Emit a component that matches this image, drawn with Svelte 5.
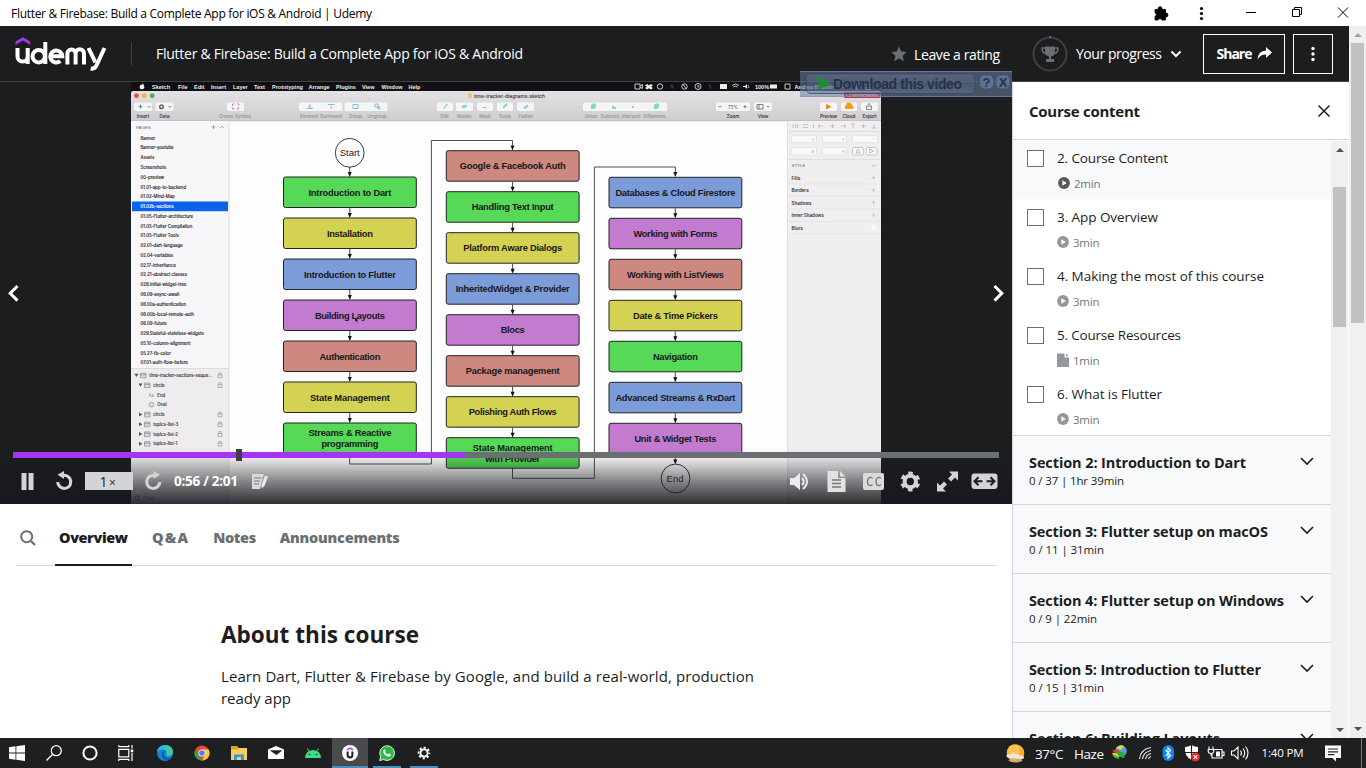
<script>
  const lectures = [
    { t: '2. Course Content', w: 111, d: '2min', icon: 'play', active: true },
    { t: '3. App Overview', w: 101, d: '3min', icon: 'play' },
    { t: '4. Making the most of this course', w: 207, d: '3min', icon: 'play' },
    { t: '5. Course Resources', w: 124, d: '1min', icon: 'file' },
    { t: '6. What is Flutter', w: 105, d: '3min', icon: 'play' }
  ];
  const sections = [
    { t: 'Section 2: Introduction to Dart', w: 217, s: '0 / 37 | 1hr 39min', sw: 95 },
    { t: 'Section 3: Flutter setup on macOS', w: 239, s: '0 / 11 | 31min', sw: 75 },
    { t: 'Section 4: Flutter setup on Windows', w: 255, s: '0 / 9 | 22min', sw: 68 },
    { t: 'Section 5: Introduction to Flutter', w: 232, s: '0 / 15 | 31min', sw: 75 },
    { t: 'Section 6: Building Layouts', w: 191 }
  ];

  const G = '#55d957', Y = '#d4d252', B = '#7b9cd9', P = '#c27bce', R = '#cd8880';
  const columns = [
    { x: 283.5, y: 177, items: [
      ['Introduction to Dart', G, 83], ['Installation', Y, 46], ['Introduction to Flutter', B, 92],
      ['Building Layouts', P, 70], ['Authentication', R, 61], ['State Management', Y, 80],
      ['Streams & Reactive|programming', G, 83, 57]] },
    { x: 446.3, y: 150.7, items: [
      ['Google & Facebook Auth', R, 106], ['Handling Text Input', G, 82], ['Platform Aware Dialogs', Y, 99],
      ['InheritedWidget & Provider', B, 114], ['Blocs', P, 24], ['Package management', R, 94],
      ['Polishing Auth Flows', Y, 88], ['State Management|with Provider', G, 80, 55]] },
    { x: 609, y: 177.3, items: [
      ['Databases & Cloud Firestore', B, 120], ['Working with Forms', P, 84], ['Working with ListViews', R, 97],
      ['Date & Time Pickers', Y, 85], ['Navigation', G, 45], ['Advanced Streams & RxDart', B, 120],
      ['Unit & Widget Tests', P, 82]] }
  ];
  const macMenu = [['Sketch', 152, 1], ['File', 178], ['Edit', 194], ['Insert', 211], ['Layer', 233], ['Text', 254], ['Prototyping', 272], ['Arrange', 308.5], ['Plugins', 336], ['View', 362], ['Window', 381.5], ['Help', 408.5]];
  const pages = ['Banner', 'Banner-youtube', 'Assets', 'Screenshots', '00-preview', '01.01-app-to-backend', '01.02-Mind-Map', '01.02b-sections', '01.05-Flutter-architecture', '01.05-Flutter Compilation', '01.05-Flutter Tools', '02.01-dart-language', '02.04-variables', '02.17-inheritance', '02.21-abstract classes', '028.Initial-widget-tree', '06.09-async-await', '06.00a-authentication', '06.00b-local-remote-auth', '06.09-future', '029.Stateful-stateless-widgets', '05.10-column-alignment', '05.27-fb-color', '07.01-auth-flow-before'];
  const layers = [
    { t: 'time-tracker-sections-seque...', x: 149, open: true, ax: 136.5, lock: true },
    { t: 'circle', x: 153, open: true, ax: 140.5, lock: true },
    { t: 'End', x: 157, text: true },
    { t: 'Oval', x: 157, oval: true },
    { t: 'circle', x: 153, ax: 140.5, lock: true },
    { t: 'topics-list-3', x: 153, ax: 140.5, lock: true },
    { t: 'topics-list-2', x: 153, ax: 140.5, lock: true },
    { t: 'topics-list-1', x: 153, ax: 140.5, lock: true }
  ];
  const tools = [['Insert', 143, 1], ['Data', 164.5, 1], ['Create Symbol', 235], ['Forward', 309], ['Backward', 331], ['Group', 355.5], ['Ungroup', 377], ['Edit', 444.5], ['Rotate', 464.5], ['Mask', 485], ['Scale', 505], ['Flatten', 525.5], ['Union', 591], ['Subtract', 610], ['Intersect', 631], ['Difference', 654.5], ['Zoom', 733, 1], ['View', 763, 1], ['Preview', 828.5, 1], ['Cloud', 849, 1], ['Export', 869.5, 1]];
  const buttons = [[134, 18], [155.5, 18], [227, 17], [299, 43.5], [344.5, 43], [437, 16], [456, 17], [477, 16], [497, 16], [517, 17], [583, 84], [716, 34], [754, 18], [820, 17], [841, 16], [861, 17]];
  const inspector = [['Fills', 177.5], ['Borders', 190], ['Shadows', 202.5], ['Inner Shadows', 215], ['Blurs', 227.5]];

  // Tracks a label so that it spans the given width.
  function fit(node, width) {
    const natural = node.getBoundingClientRect().width;
    const n = node.textContent.length - 1;
    if (n > 0) node.style.letterSpacing = (width - natural) / n + 'px';
  }
</script>

<div class="window">
  <div class="titlebar">
    <span class="apptitle" use:fit={361}>Flutter &amp; Firebase: Build a Complete App for iOS &amp; Android | Udemy</span>
    <svg class="winctl" width="216" height="26" viewBox="1150 0 216 26">
      <path d="M1155 9.500h3.300a2 2 0 1 1 3.600 0h3.600v3.600a2 2 0 1 1 0 3.900V20h-3.600a2 2 0 0 0-3.800 0H1155v-3.600a2 2 0 0 0 0-3.700z" fill="#000" stroke="#000" stroke-width=".8" />
      <g fill="#000"><circle cx="1201.500" cy="8.500" r="1.600" /><circle cx="1201.500" cy="13.500" r="1.600" /><circle cx="1201.500" cy="18.500" r="1.600" /></g>
      <g fill="none" stroke="#000"><path d="M1246 12.500h10" /><path d="M1292.500 9.500h7v7h-7zM1294.500 9.500v-2h7v7h-2" /><path d="M1338 7.500l10 10m0-10l-10 10" /></g>
    </svg>
  </div>

  <div class="page">
    <div class="content">
      <header>
        <svg class="logo" width="92" height="38" viewBox="15 35 92 38">
          <path d="M15.500 41.600L23 37.200l7.300 4.400v3.300L23 40.600l-7.500 4.300z" fill="#a435f0" />
          <g fill="none" stroke="#fff" stroke-width="4">
            <path d="M17.500 48v8.500a5 5 0 0 0 10.200 0V48m0 8v8" />
            <circle cx="38.700" cy="56.200" r="6.200" /><path d="M45.300 42v22" />
            <path d="M50.500 56.200h11.800a6 6 0 1 0-2 4.800" />
            <path d="M67.400 64.500V53.500a4.100 4.100 0 0 1 8.200 0v11m0-11a4.200 4.200 0 0 1 8.400 0v11" />
            <path d="M88.500 48l6.900 14.300M104.500 48l-7.800 17q-2 4.500-6 3.500" />
          </g>
        </svg>
        <i class="divider"></i>
        <div class="course"><span use:fit={367}>Flutter &amp; Firebase: Build a Complete App for iOS &amp; Android</span></div>
        <div class="rating">
          <svg width="16" height="16" viewBox="0 0 16 16"><path d="M8 .5l2.200 5 5.500.5-4.100 3.700 1.200 5.500L8 12.300l-4.800 2.900 1.200-5.500L.3 6l5.500-.5z" fill="#6a6f73" /></svg>
          <span use:fit={86}>Leave a rating</span>
        </div>
        <div class="progress">
          <svg width="36" height="36" viewBox="0 0 36 36">
            <circle cx="18" cy="18" r="16.500" fill="none" stroke="#3e4143" stroke-width="2" /><path d="M17.500 1h1.300" stroke="#8d7cf0" stroke-width="2" />
            <path d="M13 10.500h10v5q0 5-5 5t-5-5z" fill="#6a6f73" /><path d="M13 12h-3q0 5.500 5 5.800M23 12h3q0 5.500-5 5.800" fill="none" stroke="#6a6f73" stroke-width="1.500" /><path d="M17 20h2v3h3v3h-8v-3h3z" fill="#6a6f73" />
          </svg>
          <span use:fit={86}>Your progress</span>
          <svg width="12" height="8" viewBox="0 0 12 8"><path d="M1.500 1.500L6 6l4.500-4.500" fill="none" stroke="#fff" stroke-width="2" /></svg>
        </div>
        <div class="btn share">
          <span use:fit={36}>Share</span>
          <svg width="15" height="14" viewBox="0 0 15 14"><path d="M9 0l6 5.500L9 11V7.500Q3.500 7.300.5 12.500 1 4.200 9 3.500z" fill="#fff" /></svg>
        </div>
        <div class="btn more">
          <svg width="4" height="16" viewBox="0 0 4 16"><g fill="#fff"><circle cx="2" cy="2.500" r="1.700" /><circle cx="2" cy="8" r="1.700" /><circle cx="2" cy="13.500" r="1.700" /></g></svg>
        </div>
      </header>

      <div class="columns">
        <main>
          <div class="video">
            <svg class="frame" width="1012" height="422" viewBox="0 82 1012 422" font-family="'Liberation Sans', Arial, sans-serif">
              <defs>
                <linearGradient id="bar" x1="0" y1="0" x2="0" y2="1"><stop offset="0" stop-color="#e3e1e3" /><stop offset="1" stop-color="#cfcdcf" /></linearGradient>
                <linearGradient id="shade" x1="0" y1="0" x2="0" y2="1"><stop offset="0" stop-color="#17181d" stop-opacity="0" /><stop offset=".2" stop-color="#17181d" stop-opacity=".1" /><stop offset=".6" stop-color="#17181d" stop-opacity=".53" /><stop offset="1" stop-color="#17181d" stop-opacity=".9" /></linearGradient>
                <linearGradient id="dl" x1="0" y1="0" x2="0" y2="1"><stop offset="0" stop-color="#7484a0" /><stop offset=".5" stop-color="#4f6080" /><stop offset="1" stop-color="#6f809f" /></linearGradient>
              </defs>
              <rect x="0" y="82" width="1012" height="422" fill="#1c1d1f" />
              <rect x="131" y="82" width="750" height="422" fill="#101014" />
              <path d="M131 504V94a3 3 0 0 1 3-3h744a3 3 0 0 1 3 3v410z" fill="#fdfdfd" />
              <path d="M131 121V94a3 3 0 0 1 3-3h744a3 3 0 0 1 3 3v27z" fill="url(#bar)" />
              <path d="M131 120.800h750" stroke="#b9b7b9" stroke-width=".7" />
              <rect x="131" y="121" width="98" height="383" fill="#f7f6f8" />
              <rect x="131" y="368" width="98" height="136" fill="#eeecef" />
              <path d="M229 121v383M131 368.500h98" stroke="#d9d7da" stroke-width=".8" />
              <rect x="787.500" y="121" width="93.500" height="383" fill="#f0eef1" />
              <path d="M787.500 121v383" stroke="#dad8db" stroke-width=".8" />

              <path d="M142 84.500q1.500-.7 2.200.5-1 1 .3 2.200-.8 2.500-2.500 2-2 .6-2.500-2 .2-2.900 2.500-2.700zM142 84q0-1.200 1.200-1.600" fill="#f4f4f4" />
              <g font-size="5.500" fill="#eee" font-weight="bold">
                {#each macMenu as m}<text x={m[1]} y="88.500">{m[0]}</text>{/each}
                <text x="755" y="88.500">100%</text><text x="794.500" y="88.500" textLength="41">Andrea Bizzotto</text>
              </g>
              <g fill="none" stroke="#dedede" stroke-width=".9">
                <path d="M635 84h5v5h-5zM640 86l2.500-1.500v4L640 87" /><circle cx="660" cy="86.500" r="2.700" /><circle cx="684.500" cy="86.500" r="2.700" /><circle cx="698" cy="86.500" r="3" /><path d="M698 85v2h1.500M732 85.500q3.500-3 7 0M733.500 87q2-1.600 4 0M785 84h5v5h-5z" />
                <circle cx="844" cy="86" r="1.900" /><path d="M845.500 87.500l2 2M866 84.500h5M866 87h5M866 89.300h5" />
                <path d="M672 84v5m-2-4l4 3m36-4.500v5.500m-1.500-4l3 2.500" stroke="#444" />
              </g>
              <circle cx="857.500" cy="86.500" r="3" fill="#7777d8" stroke="#dedede" stroke-width=".5" />
              <path d="M647 84l2 1.300 2-1.300 2 1.500-2 1.300 2 1.300-2 1.500-2-1.300-2 1.300-2-1.500 2-1.300-2-1.300zM720 84h7v5h-7zM743 86h2l2-2v5l-2-2h-2zM770 84.500h7v4h-7z" fill="#eee" />
              <path d="M683 84.500l3 4M748 85q1.500 1.500 0 3" stroke="#eee" fill="none" stroke-width=".8" />

              <circle cx="136.500" cy="95.700" r="2.400" fill="#ed4b45" /><circle cx="144.300" cy="95.700" r="2.400" fill="#eeb63e" /><circle cx="152.200" cy="95.700" r="2.400" fill="#3bb847" />
              <rect x="844" y="92" width="36.500" height="6" rx="1" fill="#c52f3f" /><text x="846" y="96.800" font-size="4.600" font-weight="bold" fill="#f6d9dc" textLength="32">• 2 Notifications</text>
              <path d="M468 93h3l1 1v4h-4z" fill="#f6c36d" />
              <text x="474" y="97.600" font-size="5.300" fill="#444" stroke="#444" stroke-width=".12" textLength="71">time-tracker-diagrams.sketch</text>
              {#each buttons as b}<rect x={b[0]} y="102.500" width={b[1]} height="8.500" rx="1.500" fill="#f6f5f6" />{/each}
              <g font-size="4.600" text-anchor="middle" font-family="Inter, sans-serif">
                {#each tools as t}<text x={t[1]} y="118" fill={t[2] ? '#3b3a3c' : '#99979a'} stroke={t[2] ? '#3b3a3c' : '#99979a'} stroke-width=".12">{t[0]}</text>{/each}
                <text x="733" y="108.500" fill="#555">73%</text>
              </g>
              <g fill="none" stroke="#666" stroke-width=".8">
                <path d="M138.500 106.700h4m-2-2v4M147.500 106l1.500 1.500 1.500-1.500M168.500 106l1.500 1.500 1.500-1.500M718.500 106.700h3M743.500 106.700h3m-1.500-1.500v3M757 104.500h6v4.500h-6zm2 0v4.500M767 106l1 1.300 1-1.300" />
                <circle cx="161.500" cy="106.700" r="1.800" stroke-width="1.500" /><path d="M868 106h-1.500v3.500h5V106H870m-1 1.500v-4m-1 1l1-1 1 1" />
              </g>
              <g fill="none" stroke="#ca74cf" stroke-width=".9"><path d="M234.500 104h-2v2m4.500-2h2v1.500m-6.500 2v1.500h2m2 0h2v-2" /></g>
              <g fill="none" stroke="#73b9e3" stroke-width=".9"><path d="M306.500 108.500h6.500M309.800 104v3.500m-1.500-1.200l1.500 1.200 1.500-1.200M328 104.500h6.500M331.200 109v-3.500M353 104.500h5v4h-5zM375 104h3v3h-3zM378 107h2v2h-2z" /></g>
              <g fill="#7ddbc0"><path d="M443 108.500l4-5 1 1-4 4.500zM462.500 105h3v-1l1.500 2-1.500 2h-4zM482 108a3 3 0 0 1 5 0zM503 108.500v-2l3-3h1.500v1.500l-3 3zM523 108l4-3.500 1.500 1.500-3 3z" /><path d="M591 106.500v-1.500l2-1.500h3v3.500l-2 2h-3zM612 106.500v2.500h4v-2h-2v-2zM632 106h2v2h-2zM654 106.500v-1.500l2-1.500h3v3.500l-2 2h-3z" /></g>
              <path d="M826 103.800l5.500 2.900-5.500 2.800z" fill="#e88921" /><path d="M845.500 109a2 2 0 0 1 .5-3.500 3 3 0 0 1 6 0 2 2 0 0 1 .5 3.500z" fill="#f49b19" />

              <text x="136" y="128.800" font-size="4.400" fill="#666">PAGES</text>
              <path d="M211.500 127h4m-2-2v4M220 128l2-2 2 2" stroke="#777" stroke-width=".6" fill="none" />
              <rect x="132" y="201.500" width="96" height="9.700" fill="#0a63ea" />
              <g font-size="4.350" font-family="Inter, sans-serif">
                {#each pages as p, i}<text x="140.500" y={139.700 + i * 9.770} fill={i === 7 ? '#fff' : '#28282a'} stroke={i === 7 ? '#fff' : '#28282a'} stroke-width=".14">{p}</text>{/each}
                {#each layers as l, i}
                  {@const y = 375.300 + i * 9.770}
                  {#if l.ax}<path d={l.open ? `M${l.ax - 2} ${y - 1.500}h4l-2 3.300z` : `M${l.ax - 1.500} ${y - 2}v4l3.300-2z`} fill="#555" />{/if}
                  {#if l.text}<text x="148.500" y={y + 1.800} fill="#888">Aa</text>{:else if l.oval}<circle cx="151.500" cy={y} r="2.300" fill="#ddd" stroke="#888" stroke-width=".7" />{:else}<path d={`M${l.x - 8.500} ${y - 2}h5.500v4.500h-5.500zm0 1.500h5.500`} fill="#ddd" stroke="#888" stroke-width=".7" />{/if}
                  <text x={l.x + .3} y={y + 1.700} fill="#333" stroke="#333" stroke-width=".12">{l.t}</text>
                  {#if l.lock}<path d={`M218 ${y - .4}h4v2.800h-4zM218.800 ${y}v-2.200h2.400v2.200`} fill="none" stroke="#999" stroke-width=".7" />{/if}
                {/each}
                <text x="143.500" y="499.500" fill="#555">Filter</text><circle cx="137.500" cy="498" r="2.200" fill="none" stroke="#555" stroke-width=".7" />
              </g>

              <g fill="none" stroke="#bcbabd" stroke-width=".9">
                <path d="M793 124v4m2.500-4v4m2-4v4M803 124.500h5m-5 3h5M813.500 124v4M819 124v4m0-2h4M830 126h5m-2.500-2v4M841 126h4m0-2v4M851 124h4m-2 0v4M861 126h5m-2.500-2v4M871.500 128h5m-2.500 0v-4" />
                <path d="M788 131.500h93M788 159.500h93" stroke="#dddbde" />
              </g>
              <g fill="#f9f8fa" stroke="#dcdadd" stroke-width=".6"><rect x="791.500" y="135.500" width="25" height="7" rx="1" /><rect x="822.500" y="135.500" width="24" height="7" rx="1" /><rect x="852.500" y="135.500" width="25" height="7" rx="1" /><rect x="791.500" y="147.500" width="25" height="7.500" rx="1" /><rect x="822.500" y="147.500" width="24" height="7.500" rx="1" /><rect x="852.500" y="147.500" width="11" height="7.500" rx="1.500" stroke="#aaa" /><rect x="866" y="147.500" width="11" height="7.500" rx="1.500" stroke="#aaa" /></g>
              <g font-size="3.500" fill="#aaa"><text x="812" y="140.500">X</text><text x="842" y="140.500">Y</text><text x="873" y="140.500">°</text><text x="811" y="153">W</text><text x="842" y="153">H</text></g>
              <path d="M856 153l2-4 2 4zM869.500 149v4l4-2z" fill="none" stroke="#999" stroke-width=".6" />
              <text x="791.500" y="167.300" font-size="4.400" fill="#666">STYLE</text><path d="M872 165l1.800 1.500 1.800-1.500" fill="none" stroke="#888" stroke-width=".6" />
              {#each inspector as s}
                <text x="791.500" y={s[1] + 2} font-size="4.500" font-family="Inter, sans-serif" font-weight="600" fill="#333">{s[0]}</text>
                <path d={`M788 ${s[1] + 6.500}h93`} stroke="#dddbde" stroke-width=".6" />
                {#if s[0] !== 'Blurs'}<path d={`M871.500 ${s[1]}h4m-2-2v4`} stroke="#bbb" stroke-width=".7" />{:else}<circle cx="873.500" cy={s[1]} r="2" fill="#fff" />{/if}
              {/each}

              <g fill="none" stroke="#3a3a3a" stroke-width=".9">
                <path d="M349.700 167v5M349.700 454v10h81.700V140.500h81.100v5M512.500 468v10.300h81.900V167h81v5M675.300 454v7" />
              </g>
              <g fill="#111"><path d="M347.700 172h4l-2 5zM510.500 145.500h4l-2 5zM673.300 172h4l-2 5zM673.300 459.500h4l-2 5z" /></g>
              <g fill="#fdfdfd" fill-opacity="0" stroke="#222" stroke-width=".9"><circle cx="349.700" cy="152.800" r="14.400" /><circle cx="675.500" cy="478.500" r="14.400" /></g>
              <text x="349.700" y="156" font-size="9.500" text-anchor="middle" fill="#222">Start</text>
              <text x="675" y="482" font-size="9.500" text-anchor="middle" fill="#333">End</text>
              {#each columns as c}
                {#each c.items as it, i}
                  {@const y = c.y + i * 41}
                  {@const lines = it[0].split('|')}
                  {#if i < c.items.length - 1}<path d={`M${c.x + 66.300} ${y + 31}v6`} stroke="#333" stroke-width=".9" /><path d={`M${c.x + 64.300} ${y + 36}h4l-2 5z`} fill="#111" />{/if}
                  <rect x={c.x} y={y} width="132.800" height="30.500" rx="2" fill={it[1]} stroke="#222" stroke-width="1" />
                  {#each lines as line, k}
                    <text x={c.x + 66.400 - (k ? it[3] : it[2]) / 2} y={lines.length > 1 ? y + 13.300 + k * 11 : y + 18.700} font-size="9.300" font-weight="bold" fill="#17181a" textLength={k ? it[3] : it[2]}>{line}</text>
                  {/each}
                {/each}
              {/each}
              <path d="M355 317v5l1.200-1 1 2 .8-.5-1-1.800h1.500z" fill="#111" stroke="#ddd" stroke-width=".2" />

              <g fill="none" stroke="#fff" stroke-width="3"><path d="M17.500 286l-7.300 7.300 7.300 7.300M994.500 286l7.300 7.300-7.300 7.300" /></g>
              <rect x="0" y="448" width="1012" height="56" fill="url(#shade)" />
            </svg>

            <div class="controls">
              <div class="track"><i class="played"></i><i class="thumb"></i></div>
              <svg width="1012" height="46" viewBox="0 458 1012 46">
                <g fill="#d3d4d5">
                  <path d="M21.500 473h5v17h-5zM28.500 473h5v17h-5z" />
                  <path d="M85 472h48v18H85z" />
                  <path d="M64 471v8l-6.500-4.300zM153.500 471v8l6.500-4.300z" />
                </g>
                <g fill="none" stroke="#d3d4d5" stroke-width="3"><path d="M63 475.300q4.500-.3 6.800 3.100a6.500 6.500 0 1 1-12 3.500M154.500 475.300q-4.500-.3-6.800 3.100a6.500 6.500 0 1 0 12 3.500" /></g>
                <text x="99.500" y="486.500" font-family="'Open Sans', sans-serif" font-size="14" fill="#1c1d1f">1</text><text x="109" y="486.500" font-family="'Open Sans', sans-serif" font-size="12" fill="#1c1d1f">×</text>
                <text x="174" y="486" font-family="'Open Sans', sans-serif" font-size="13.500" font-weight="700" fill="#fff" textLength="64">0:56 / 2:01</text>
                <path d="M252 474h12l-1 3-3 12h-8z" fill="#d8d9da" /><path d="M265 475.500l3 1-3.500 9.500-3 2.500v-4z" fill="#e9e9ea" /><path d="M254 478h7.500M254 481h6M254 484h5" stroke="#777" />
                <path d="M790 478h4l6-5v17l-6-5h-4z" fill="#ececec" /><path d="M802 478q3.500 3.500 0 7M803 474q8 7.500 0 15" fill="none" stroke="#ececec" stroke-width="2" />
                <path d="M827.500 471H838v7h7.500v14h-18zM840 471l5.500 5.500H840z" fill="#e1e2e2" /><path d="M832 480h9M832 483.500h9M832 487h9" stroke="#777" stroke-width="1.300" />
                <rect x="863" y="473" width="21" height="17" rx="2" fill="#dadbdb" /><g fill="none" stroke="#777" stroke-width="1.300"><path d="M872.500 478.500q-1-1.500-3-1-2 .8-2 4t2 4q2 .5 3-1M881 478.500q-1-1.500-3-1-2 .8-2 4t2 4q2 .5 3-1" /></g>
                <circle cx="910.300" cy="481.500" r="5.700" fill="none" stroke="#d3d4d5" stroke-width="4" /><circle cx="910.300" cy="481.500" r="8.200" fill="none" stroke="#d3d4d5" stroke-width="3.500" stroke-dasharray="4.300 4.287" stroke-dashoffset="-2.100" />
                <g fill="#d3d4d5"><path d="M949 471.500h9v9l-3-3-4 4-3-3 4-4zM946 491.500h-9v-9l3 3 4-4 3 3-4 4z" /><rect x="971.500" y="473.500" width="26" height="15.500" rx="3" /></g>
                <path d="M974.500 481.300h8M978.500 477.300l-4 4 4 4M994.500 481.300h-8M990.500 477.300l4 4-4 4" fill="none" stroke="#1c1d1f" stroke-width="2" />
              </svg>
            </div>

            <svg class="download" width="212" height="26" viewBox="800 71 212 26">
              <rect x="800" y="71" width="212" height="26" fill="#6b7e9f" fill-opacity=".55" /><path d="M800 71.500h212M800 96.500h212" stroke="#7892bd" stroke-opacity=".6" />
              <rect x="806" y="74" width="169" height="19.500" rx="5" fill="url(#dl)" fill-opacity=".4" stroke="#304a76" stroke-opacity=".8" />
              <path d="M816 75.500l15 8.500-14 6 2.500-6z" fill="#19922b" />
              <text x="833" y="88.500" font-family="'Liberation Sans', Arial, sans-serif" font-weight="bold" font-size="14" fill="#27314a" textLength="129">Download this video</text>
              <g fill="#5f7190" stroke="#3e567f"><rect x="979.500" y="75" width="14" height="14" rx="5" /><rect x="996" y="75" width="14" height="14" rx="5" /></g>
              <g font-family="'Liberation Sans', Arial, sans-serif" font-weight="bold" font-size="13" fill="#27314a" text-anchor="middle"><text x="986.500" y="86.500">?</text><text x="1003" y="86.500">X</text></g>
            </svg>
          </div>

          <nav>
            <svg width="16" height="16" viewBox="0 0 16 16"><circle cx="6.700" cy="6.700" r="5.500" fill="none" stroke="#6a6f73" stroke-width="2" /><path d="M10.700 10.700L15 15" stroke="#6a6f73" stroke-width="2.200" /></svg>
            <span class="tab on"><b use:fit={69}>Overview</b></span>
            <span class="tab"><b use:fit={36}>Q&amp;A</b></span>
            <span class="tab"><b use:fit={43}>Notes</b></span>
            <span class="tab"><b use:fit={120}>Announcements</b></span>
          </nav>
          <article>
            <h1><span use:fit={198}>About this course</span></h1>
            <p><span use:fit={533}>Learn Dart, Flutter &amp; Firebase by Google, and build a real-world, production</span><br /><span use:fit={70}>ready app</span></p>
          </article>
        </main>

        <aside>
          <div class="side-head">
            <b use:fit={111}>Course content</b>
            <svg width="14" height="14" viewBox="0 0 14 14"><path d="M1.500 1.500l11 11m0-11l-11 11" stroke="#1c1d1f" stroke-width="1.500" /></svg>
          </div>
          <div class="side-body">
            <div class="list">
              {#each lectures as l}
                <div class="lecture" class:active={l.active}>
                  <i class="check"></i>
                  <div>
                    <div class="ltitle"><span use:fit={l.w}>{l.t}</span></div>
                    <div class="meta">
                      {#if l.icon === 'play'}
                        <svg width="12" height="12" viewBox="0 0 12 12"><circle cx="6" cy="6" r="5.900" fill="currentColor" /><path d="M4.300 3.300v5.400L8.800 6z" fill="#fff" /></svg>
                      {:else}
                        <svg width="12" height="14" viewBox="0 0 12 14"><path d="M0 .5h7.500v4H12V14H0zM8.800.5L11.500 3.300H8.800z" fill="currentColor" /></svg>
                      {/if}
                      <span use:fit={26.500}>{l.d}</span>
                    </div>
                  </div>
                </div>
              {/each}
              {#each sections as s}
                <div class="section">
                  <div><b use:fit={s.w}>{s.t}</b>{#if s.s}<span class="sub"><span use:fit={s.sw}>{s.s}</span></span>{/if}</div>
                  <svg width="14" height="9" viewBox="0 0 14 9"><path d="M1 1l6 6 6-6" fill="none" stroke="#1c1d1f" stroke-width="1.600" /></svg>
                </div>
              {/each}
            </div>
            <div class="scroll inner"><i class="up"></i><i class="grip"></i><i class="down"></i></div>
          </div>
        </aside>
      </div>
    </div>
    <div class="scroll outer"><i class="up"></i><i class="grip"></i><i class="down"></i></div>
  </div>

  <footer>
    <div class="apps">
      <span><svg viewBox="0 0 16 16"><path d="M0 2.200l6.500-.9v6.300H0zM7.300 1.200L16 0v7.600H7.300zM0 8.400h6.500v6.300L0 13.800zM7.300 8.400H16V16l-8.700-1.200z" fill="#fff" /></svg></span>
      <span><svg viewBox="0 0 16 16"><g fill="none" stroke="#fff" stroke-width="1.300"><circle cx="10.300" cy="5.700" r="5" /><path d="M6.700 9.300L.5 15.500" /></g></svg></span>
      <span class="ring"><svg viewBox="0 0 16 16"><circle cx="8" cy="8" r="6.600" fill="none" stroke="#fff" stroke-width="2" /></svg></span>
      <span class="views"><svg viewBox="0 0 16 16"><g fill="none" stroke="#fff" stroke-width="1.200"><path d="M.8 4.300h10v7.500h-10zM.8 0v1.700h10V0M.8 16v-1.700h10V16M14 0v3.500M14 8v8" /></g><path d="M12.700 4.500h2.600v2.800h-2.600z" fill="#fff" /></svg></span>
      <span><svg viewBox="0 0 16 16"><circle cx="8" cy="8" r="8" fill="#1384d3" /><path d="M.2 6.500Q2 0 8.500 0 16 .6 16 7q-.4 4-4.500 4-3 0-2.200-2Q10.500 5 6.500 4.300 2.500 4 .2 6.500z" fill="#40c9a0" /><path d="M.2 6.500Q2 0 8.500 0q3 .2 5 2-6-1-8 2.400Q2.300 4.500.2 6.500z" fill="#2cb9df" /><path d="M6 6q-3 5 1.500 8.500 4 1.500 7-2-4 1.500-6-.5Q6 9.500 7 6z" fill="#0b5ba8" /></svg></span>
      <span><svg viewBox="0 0 16 16"><circle cx="8" cy="8" r="7.500" fill="#e6483a" /><path d="M1.300 4.500L6 12.500 8 15.500A7.500 7.500 0 0 1 1.300 4.500z" fill="#2ba24c" /><path d="M8 4.500h6.700A7.500 7.500 0 0 1 8 15.500L11.500 9z" fill="#fcc934" /><circle cx="8" cy="8" r="3.600" fill="#fff" /><circle cx="8" cy="8" r="2.800" fill="#437ff1" /></svg></span>
      <span><svg viewBox="0 0 16 16"><path d="M0 1h6l1.500 2H16v12H0z" fill="#f9cf58" /><path d="M0 1h6l1.500 2-1 1.500H0z" fill="#dfa221" /><path d="M3 15V9.500h10V15h-3v-3H6v3z" fill="#3998dd" /></svg></span>
      <span><svg viewBox="0 0 16 16"><path d="M0 4.500L8 1l8 3.500V14H0z" fill="#fff" /><path d="M1.500 5.200h13L8.500 10z" fill="#1e1f21" /></svg></span>
      <span><svg viewBox="0 0 16 16"><path d="M0 13q.5-7.500 8-8 7.500.5 8 8z" fill="#3ddc84" /><path d="M2.500 3.500l2 3.500M13.500 3.500l-2 3.500" stroke="#3ddc84" /><circle cx="4.500" cy="9.500" r=".8" fill="#1e1f21" /><circle cx="11.500" cy="9.500" r=".8" fill="#1e1f21" /></svg></span>
      <span class="cur run"><svg viewBox="0 0 16 16"><circle cx="8" cy="8" r="8" fill="#fff" /><path d="M5 4.800l3-1.700 3 1.700" fill="none" stroke="#a435f0" stroke-width="1.500" /><path d="M5.600 6.500V10a2.400 2.400 0 0 0 4.800 0V6.500" fill="none" stroke="#1c1d1f" stroke-width="2" /></svg></span>
      <span class="run"><svg viewBox="0 0 16 16"><path d="M.7 15.500l1-3.900A7.300 7.300 0 1 1 4.600 14.500z" fill="#2fb944" stroke="#e9f4e9" stroke-width="1" /><path d="M5.200 4.200q1-.3 1.500 1.800-.7.800-.6 1.200 1 1.700 2.700 2.400.5 0 1-1 2 .5 2 1.300-.7 2-3 1.500Q5 10 4.200 6.700q0-1.500 1-2.500z" fill="#fff" /></svg></span>
      <span class="run"><svg viewBox="0 0 16 16"><circle cx="8" cy="8" r="3.600" fill="none" stroke="#fff" stroke-width="1.900" /><circle cx="8" cy="8" r="5.300" fill="none" stroke="#fff" stroke-width="2" stroke-dasharray="2.100 2.062" stroke-dashoffset="1.050" /></svg></span>
    </div>
    <div class="tray">
      <svg width="19" height="19" viewBox="0 0 19 19"><circle cx="9.500" cy="9" r="8.800" fill="#ffae2b" /><circle cx="8" cy="6.500" r="6" fill="#ffc458" /><path d="M3 14q-3-.5-2.500-2.500T4 10.500q3-3 5.500 0 3-1.200 4 1 4.500-.5 4.500 1.700T15 15z" fill="#ece6dc" /><path d="M2 16.500q7-2.500 15 0-3 2-7.500 2t-7.500-2z" fill="#c9ab82" /></svg>
      <div class="w deg"><span use:fit={28.500}>37°C</span></div><div class="w haze"><span use:fit={30}>Haze</span></div>
      <svg width="236" height="26" viewBox="1108 740 236 26">
        <circle cx="1121" cy="751" r="5.800" fill="#56a0d8" /><path d="M1116 748q4-4 8-2l-3 4z" fill="#ead638" /><path d="M1112 751q5-3 8 1l-1 3q-4-3-7-4z" fill="#eb3a2b" /><path d="M1112 753q5-1 8 4-6 1.500-8-4z" fill="#f3c52d" /><path d="M1112.500 755q4 0 7 3.500-5 1-7-3.500z" fill="#2eae3c" /><path d="M1117 751l10 2.500-3.500 1 1.500 3-3 .5-1-2.500-2 2z" fill="#1fae38" />
        <g fill="none" stroke="#ddd" stroke-width="1.200"><path d="M1139.500 759q1-10 11.500-11.500M1142.500 759q1-7 8.500-8.500M1145.500 759q1-4.500 5.500-5.500M1148.500 759q.5-2 2.500-2.500" /></g>
        <rect x="1162.500" y="745" width="11.500" height="16" rx="5.700" fill="#0a84ee" /><path d="M1165.500 750l5.200 5.500-2.700 2.700v-10.500l2.700 2.600-5.200 5.500" fill="none" stroke="#fff" stroke-width="1.100" />
        <path d="M1191.500 745q3 2 6.500 2 1 9-6.500 13-7.500-4-6.500-13 3.500 0 6.500-2z" fill="#fff" /><path d="M1191.500 745v15M1185 752.500h13" stroke="#1e1f21" stroke-width="1.200" /><circle cx="1195.500" cy="757" r="4.500" fill="#dc2b2b" /><path d="M1193.700 755.200l3.600 3.600m0-3.600l-3.600 3.600" stroke="#fff" stroke-width="1.100" />
        <g fill="none" stroke="#fff" stroke-width="1.100"><path d="M1214.500 749.500h7.500v8.500h-10v-4M1222.500 752h1.500v3.500h-1.500M1209 746.500v3m4-3v3m-4.800 0h5.600v1.500q0 2.500-2.800 2.500t-2.800-2.500zM1211 753.500v2" /></g><path d="M1216 751.500h4v5h-4z" fill="#fff" />
        <g fill="none" stroke="#fff" stroke-width="1.100"><path d="M1231.500 751h2.500l4-4v12l-4-4h-2.500zM1240.500 750.500q2 2.500 0 5M1243 748.500q3.500 4.500 0 9M1245.500 746.500q5 6.500 0 13" /></g>
        <text x="1261.500" y="757" fill="#fff" font-family="'Open Sans', sans-serif" font-size="11.500" textLength="42">1:40 PM</text>
        <path d="M1325 745.500h16v12.500h-5v3.500l-3.500-3.500h-7.500z" fill="#fff" /><path d="M1328 749h10M1328 751.800h10M1328 754.600h6.500" stroke="#1e1f21" stroke-width="1.200" />
      </svg>
      <i class="edge"></i>
    </div>
  </footer>
</div>

<style>
  :global(body) { background: #fff; overflow: hidden; }
  .window { width: 1366px; height: 768px; display: flex; flex-direction: column; overflow: hidden; font-family: 'Open Sans', 'Segoe UI', sans-serif; color: #1c1d1f; }
  .window * { box-sizing: border-box; }
  svg { display: block; flex: none; }
  span, b { white-space: nowrap; }
  .titlebar { height: 26px; flex: none; display: flex; justify-content: space-between; padding-left: 11px; font-size: 12px; line-height: 27px; color: #000; }
  .page { height: 712px; flex: none; display: flex; }
  .content { width: 1349px; display: flex; flex-direction: column; }
  header { height: 56px; flex: none; background: #1c1d1f; border-bottom: 1px solid #3e4143; display: flex; align-items: center; padding-left: 15px; color: #fff; font-size: 14px; font-weight: 500; }
  .divider { width: 1px; height: 22px; background: #3e4143; margin: 0 24px; }
  .course { width: 367px; flex: none; }
  .rating { display: flex; align-items: center; gap: 7px; margin-left: 368px; width: 110px; }
  .rating span { padding-top: 2px; }
  .progress { display: flex; align-items: center; gap: 8px; margin-left: 31px; width: 171px; }
  .progress > svg:last-child { margin-left: 0; }
  .btn { border: 1px solid #fff; height: 40px; display: flex; align-items: center; justify-content: center; font-weight: 700; font-size: 14px; }
  .share { width: 82px; gap: 5px; }
  .more { width: 40px; margin-left: 8px; }
  .columns { display: flex; flex: 1; min-height: 0; }
  main { width: 1012px; flex: none; }
  .video { width: 1012px; height: 422px; position: relative; }
  .controls { position: absolute; left: 0; bottom: 0; width: 1012px; height: 52px; }
  .track { position: relative; margin: 0 13px; height: 6px; background: #6a6f73; }
  .played { display: block; width: 453px; height: 6px; background: #a435f0; }
  .thumb { position: absolute; left: 223px; top: -3px; width: 6px; height: 12px; background: #3e4143; }
  .download { position: absolute; right: 0; top: -11px; z-index: 2; }
  nav { display: flex; align-items: center; height: 62px; margin: 0 16px; padding-left: 4px; border-bottom: 1px solid #d1d7dc; }
  nav svg { margin: 6px 19px 0 0; }
  .tab { height: 62px; padding: 0 4px; margin-right: 16px; line-height: 67px; font-size: 14.500px; color: #6a6f73; font-weight: 700; }
  .tab.on { width: 77px; color: #1c1d1f; border-bottom: 2px solid #1c1d1f; }
  article { padding: 52px 0 0 221px; }
  h1 { margin: 0; font-size: 22.500px; line-height: 34px; }
  p { margin: 13px 0 0; font-size: 15px; line-height: 22px; }
  aside { width: 337px; flex: none; border-left: 1px solid #d1d7dc; display: flex; flex-direction: column; background: #fff; }
  .side-head { height: 58px; flex: none; display: flex; align-items: center; justify-content: space-between; padding: 1px 18px 0 16px; font-size: 15px; border-bottom: 1px solid #d1d7dc; }
  .side-head b { margin-top: -1px; }
  .side-body { display: flex; flex: 1; min-height: 0; overflow: hidden; }
  .list { width: 318px; flex: none; }
  .lecture { height: 59px; display: flex; padding: 10px 0 0 14px; }
  .active { background: #f7f9fa; }
  .check { width: 17px; height: 17px; border: 1px solid #6a6f73; background: #fff; margin-right: 13px; flex: none; }
  .ltitle { font-size: 13.500px; line-height: 16px; height: 24px; }
  .meta { display: flex; align-items: center; gap: 4px; height: 18px; font-size: 11.500px; color: #94979a; }
  .meta span { color: #73777b; padding-top: 1px; }
  .active .meta { color: #56595c; padding-left: 1px; }
  .section { height: 69px; display: flex; justify-content: space-between; padding: 16px 17px 0 16px; border-top: 1px solid #d1d7dc; background: #f7f9fa; }
  .section b { display: block; width: max-content; font-size: 14.500px; line-height: 21px; }
  .section svg { margin-top: 5px; }
  .sub { display: block; font-size: 11.500px; line-height: 16px; }
  .scroll { width: 17px; flex: none; background: #f0f0f0; display: flex; flex-direction: column; align-items: center; }
  .up, .down { border: 4px solid transparent; width: 0; height: 0; }
  .up { border-bottom: 4px solid #505050; border-top: 0; }
  .down { border-top: 4px solid #505050; border-bottom: 0; margin-top: auto; }
  .grip { width: 13px; background: #c1c1c1; }
  .inner { height: 597px; margin-top: 1px; }
  .inner .up { margin-top: 7px; }
  .inner .grip { height: 140px; margin-top: 35px; }
  .inner .down { margin-bottom: 6px; }
  .outer .up { margin-top: 7px; border-bottom-color: #a3a3a3; }
  .outer .grip { height: 280px; margin-top: 6px; }
  .outer .down { margin-bottom: 7px; }
  footer { height: 30px; flex: none; background: #1e1f21; display: flex; justify-content: space-between; color: #fff; }
  .apps { display: flex; margin-left: -1.500px; }
  .apps span { width: 37px; display: flex; align-items: center; justify-content: center; border-bottom: 2px solid transparent; border-top: 2px solid transparent; }
  .apps svg { width: 16px; height: 16px; }
  .apps .ring { padding-right: 2px; }
  .apps .views { padding-right: 4px; }
  .apps .run { border-bottom-color: #4c8dc4; width: 28px; margin: 0 4.500px; }
  .apps .cur { width: 36px; margin: 0 .5px; background: #4a4b4d; border-top-color: #4a4b4d; }
  .tray { display: flex; align-items: center; }
  .w { font-size: 13.500px; line-height: 18px; padding-top: 2px; flex: none; }
  .deg { margin-left: 10px; width: 29px; }
  .haze { margin: 0 4px 0 10px; width: 30px; }
  .edge { width: 1px; height: 30px; background: #77787a; margin: 0 4px 0 17px; }
</style>
